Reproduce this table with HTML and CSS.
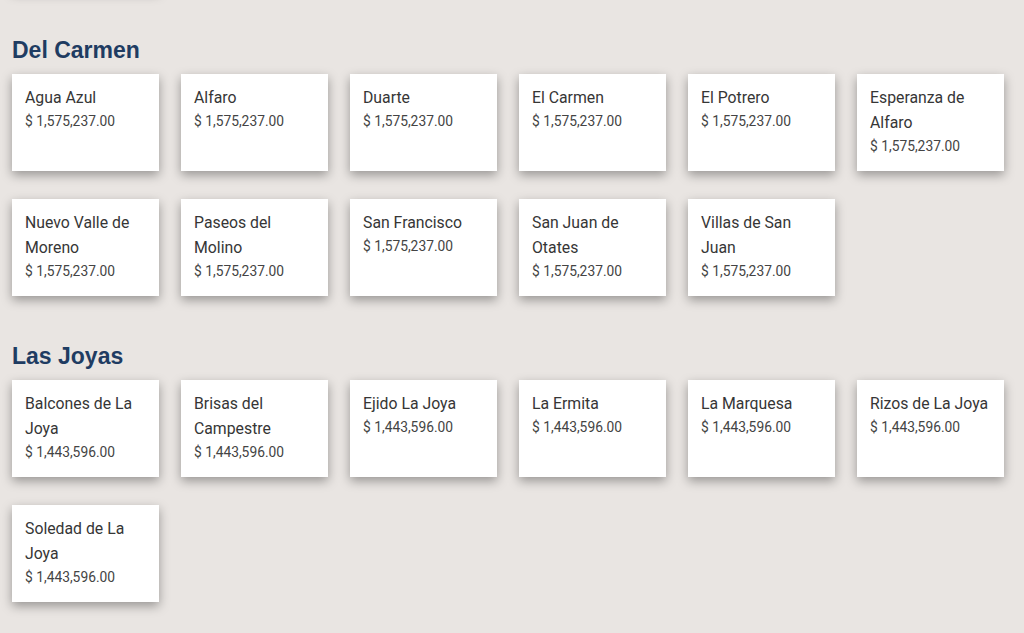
FILE: index.html
```html
<!DOCTYPE html>
<html lang="es">
<head>
<meta charset="utf-8">
<title>Colonias</title>
<link rel="stylesheet" href="styles.css">
</head>
<body>
<main class="page">
  <section class="zone zone-prev">
    <div class="grid">
      <div class="card"><div class="name">&nbsp;</div><div class="price">&nbsp;</div></div>
    </div>
  </section>

  <section class="zone">
    <h2 class="zone-title">Del Carmen</h2>
    <div class="grid">
      <div class="card"><div class="name">Agua Azul</div><div class="price">$ 1,575,237.00</div></div>
      <div class="card"><div class="name">Alfaro</div><div class="price">$ 1,575,237.00</div></div>
      <div class="card"><div class="name">Duarte</div><div class="price">$ 1,575,237.00</div></div>
      <div class="card"><div class="name">El Carmen</div><div class="price">$ 1,575,237.00</div></div>
      <div class="card"><div class="name">El Potrero</div><div class="price">$ 1,575,237.00</div></div>
      <div class="card"><div class="name">Esperanza de Alfaro</div><div class="price">$ 1,575,237.00</div></div>
      <div class="card"><div class="name">Nuevo Valle de Moreno</div><div class="price">$ 1,575,237.00</div></div>
      <div class="card"><div class="name">Paseos del Molino</div><div class="price">$ 1,575,237.00</div></div>
      <div class="card"><div class="name">San Francisco</div><div class="price">$ 1,575,237.00</div></div>
      <div class="card"><div class="name">San Juan de Otates</div><div class="price">$ 1,575,237.00</div></div>
      <div class="card"><div class="name">Villas de San Juan</div><div class="price">$ 1,575,237.00</div></div>
    </div>
  </section>

  <section class="zone">
    <h2 class="zone-title">Las Joyas</h2>
    <div class="grid">
      <div class="card"><div class="name">Balcones de La Joya</div><div class="price">$ 1,443,596.00</div></div>
      <div class="card"><div class="name">Brisas del Campestre</div><div class="price">$ 1,443,596.00</div></div>
      <div class="card"><div class="name">Ejido La Joya</div><div class="price">$ 1,443,596.00</div></div>
      <div class="card"><div class="name">La Ermita</div><div class="price">$ 1,443,596.00</div></div>
      <div class="card"><div class="name">La Marquesa</div><div class="price">$ 1,443,596.00</div></div>
      <div class="card"><div class="name">Rizos de La Joya</div><div class="price">$ 1,443,596.00</div></div>
      <div class="card"><div class="name">Soledad de La Joya</div><div class="price">$ 1,443,596.00</div></div>
    </div>
  </section>
</main>
</body>
</html>
```

FILE: styles.css
```css
html, body {
  margin: 0;
  padding: 0;
  background: #e9e5e2;
}

body {
  font-family: Roboto, "Liberation Sans", Arial, sans-serif;
  overflow: hidden;
}

.page {
  padding: 0 0 40px 12px;
}

.zone-prev {
  margin-top: -107px;
}

.zone-title {
  margin: 47px 0 11px 0;
  font-family: "Liberation Sans", Arial, sans-serif;
  font-weight: 700;
  font-size: 23px;
  line-height: 26px;
  color: #1f3c62;
}

.grid {
  display: grid;
  grid-template-columns: repeat(6, 147px);
  grid-auto-rows: 97px;
  column-gap: 22px;
  row-gap: 28px;
}

.card {
  background: #ffffff;
  box-shadow: 0 4px 10px rgba(0, 0, 0, 0.35);
  padding: 11px 8px 0 13px;
  box-sizing: border-box;
}

.name {
  font-size: 15.8px;
  line-height: 25px;
  color: #363636;
}

.price {
  font-size: 13.8px;
  line-height: 22px;
  color: #444444;
}
```
